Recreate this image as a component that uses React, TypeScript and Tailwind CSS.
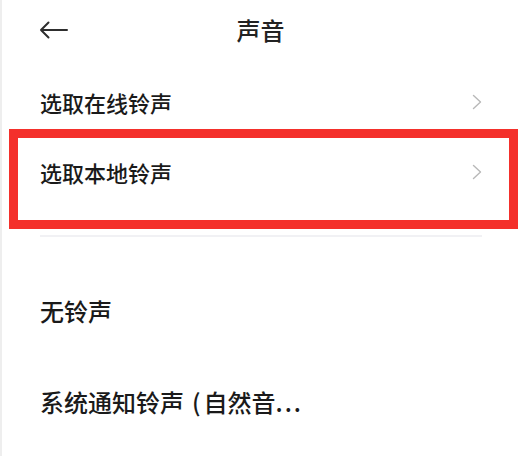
import type { ReactNode } from 'react';

const FONT = "font-['Noto_Sans_CJK_SC','Noto_Sans',sans-serif]";

function Chevron() {
  return (
    <svg width="10" height="16" viewBox="0 0 10 16" fill="none" className="shrink-0">
      <polyline points="1.5,1.5 8.5,8 1.5,14.5" stroke="#b8b8b8" strokeWidth="1.4" strokeLinecap="round" strokeLinejoin="round" />
    </svg>
  );
}

function BackArrow() {
  return (
    <svg width="30" height="18" viewBox="0 0 30 18" fill="none">
      <path d="M2 9 H28 M9.5 1.5 L2 9 L9.5 16.5" stroke="#2e2e2e" strokeWidth="2" strokeLinecap="round" strokeLinejoin="round" />
    </svg>
  );
}

interface RowProps {
  label: ReactNode;
  arrow?: boolean;
  big?: boolean;
  className?: string;
}

function Row({ label, arrow, big, className = '' }: RowProps) {
  return (
    <div className={`flex h-[44px] items-center justify-between ${className}`}>
      <span className={`${big ? 'text-[24px]' : 'text-[22px]'} flex items-center font-medium leading-none whitespace-nowrap text-[#1a1a1a]`}>
        {label}
      </span>
      {arrow && <Chevron />}
    </div>
  );
}

export default function App() {
  return (
    <div className={`${FONT} relative h-[456px] w-[519px] overflow-hidden border-l-2 border-[#eeeeee] bg-white`}>
      <header className="grid h-[60px] grid-cols-[1fr_auto_1fr] items-center">
        <div className="pl-[37px]">
          <BackArrow />
        </div>
        <h1 className="text-[24px] font-medium leading-none text-[#222]">声音</h1>
        <div />
      </header>

      <Row label="选取在线铃声" arrow className="mt-[20px] pl-[38px] pr-[37px]" />

      <div className="ml-[7px] mt-[5px] h-[100px] w-[509px] border-[9px] border-[#f4302b]">
        <Row label="选取本地铃声" arrow className="mt-[12px] pl-[22px] pr-[27px]" />
      </div>

      <div className="ml-[38px] mr-[37px] mt-[6px] h-[2px] bg-[#f1f1f4]" />

      <Row label="无铃声" big className="mt-[52px] pl-[38px]" />
      <Row
        big
        className="mt-[47px] pl-[38px]"
        label={
          <>
            系统通知铃声
            <span className="ml-[8px] mr-[3px]">(</span>
            自然音
            <span className="tracking-[2px]">...</span>
          </>
        }
      />
    </div>
  );
}
